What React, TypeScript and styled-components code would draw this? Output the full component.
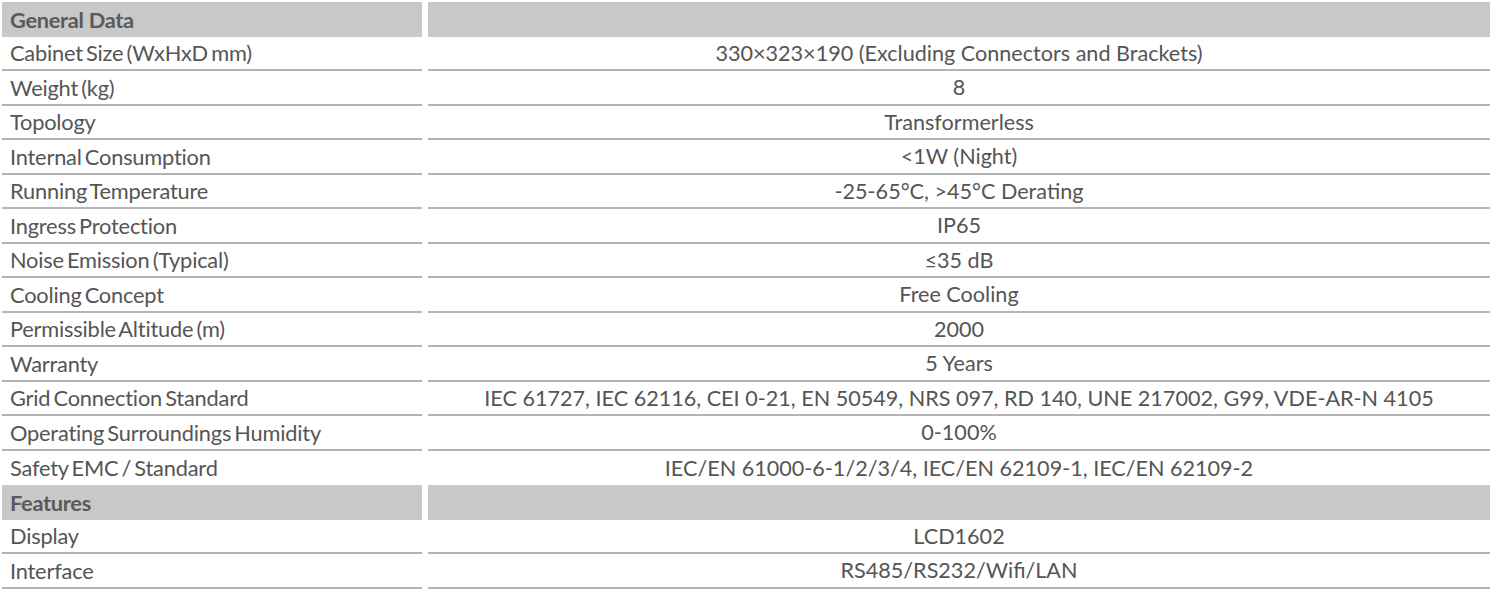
import React from "react";
import styled, { createGlobalStyle } from "styled-components";

const GlobalStyle = createGlobalStyle`
  html, body { margin: 0; padding: 0; background: #ffffff; }
  body { font-family: Lato, "Open Sans", sans-serif; }
`;

const Table = styled.div`
  display: flex;
  flex-direction: column;
  padding: 2px 0 0 2px;
  width: 1490px;
  box-sizing: border-box;
`;

const Row = styled.div`
  display: grid;
  grid-template-columns: 419.5px 1062px;
  column-gap: 6.5px;
  height: 34.5px;
`;

const Cell = styled.div<{ $head?: boolean; $center?: boolean; $noLine?: boolean }>`
  box-sizing: border-box;
  display: flex;
  align-items: center;
  justify-content: ${(p) => (p.$center ? "center" : "flex-start")};
  padding: 0 8px;
  font-size: ${(p) => (p.$center ? "21.6px" : "21.8px")};
  letter-spacing: ${(p) => (p.$head ? "-0.3px" : p.$center ? "0" : "-0.2px")};
  word-spacing: ${(p) => (p.$center || p.$head ? "0" : "-2.2px")};
  white-space: nowrap;
  color: ${(p) => (p.$head ? "#5a5a5a" : "#555555")};
  font-weight: ${(p) => (p.$head ? 700 : 400)};
  background: ${(p) => (p.$head ? "#c8c8c8" : "transparent")};
  border-bottom: ${(p) => (p.$head || p.$noLine ? "none" : "2px solid #b4b4b4")};
`;

type Item = { label: string; value?: string; head?: boolean };

const rows: Item[] = [
  { label: "General Data", head: true },
  { label: "Cabinet Size (WxHxD mm)", value: "330×323×190 (Excluding Connectors and Brackets)" },
  { label: "Weight (kg)", value: "8" },
  { label: "Topology", value: "Transformerless" },
  { label: "Internal Consumption", value: "<1W (Night)" },
  { label: "Running Temperature", value: "-25-65°C, >45°C Derating" },
  { label: "Ingress Protection", value: "IP65" },
  { label: "Noise Emission (Typical)", value: "≤35 dB" },
  { label: "Cooling Concept", value: "Free Cooling" },
  { label: "Permissible Altitude (m)", value: "2000" },
  { label: "Warranty", value: "5 Years" },
  {
    label: "Grid Connection Standard",
    value: "IEC 61727, IEC 62116, CEI 0-21, EN 50549, NRS 097, RD 140, UNE 217002, G99, VDE-AR-N 4105",
  },
  { label: "Operating Surroundings Humidity", value: "0-100%" },
  { label: "Safety EMC / Standard", value: "IEC/EN 61000-6-1/2/3/4, IEC/EN 62109-1, IEC/EN 62109-2" },
  { label: "Features", head: true },
  { label: "Display", value: "LCD1602" },
  { label: "Interface", value: "RS485/RS232/Wifi/LAN" },
];

export default function App() {
  return (
    <>
      <GlobalStyle />
      <Table>
        {rows.map((r, i) => {
          const noLine = !!rows[i + 1]?.head;
          return (
            <Row key={i}>
              <Cell $head={r.head} $noLine={noLine}>
                {r.label}
              </Cell>
              <Cell $head={r.head} $noLine={noLine} $center>
                {r.value ?? ""}
              </Cell>
            </Row>
          );
        })}
      </Table>
    </>
  );
}
